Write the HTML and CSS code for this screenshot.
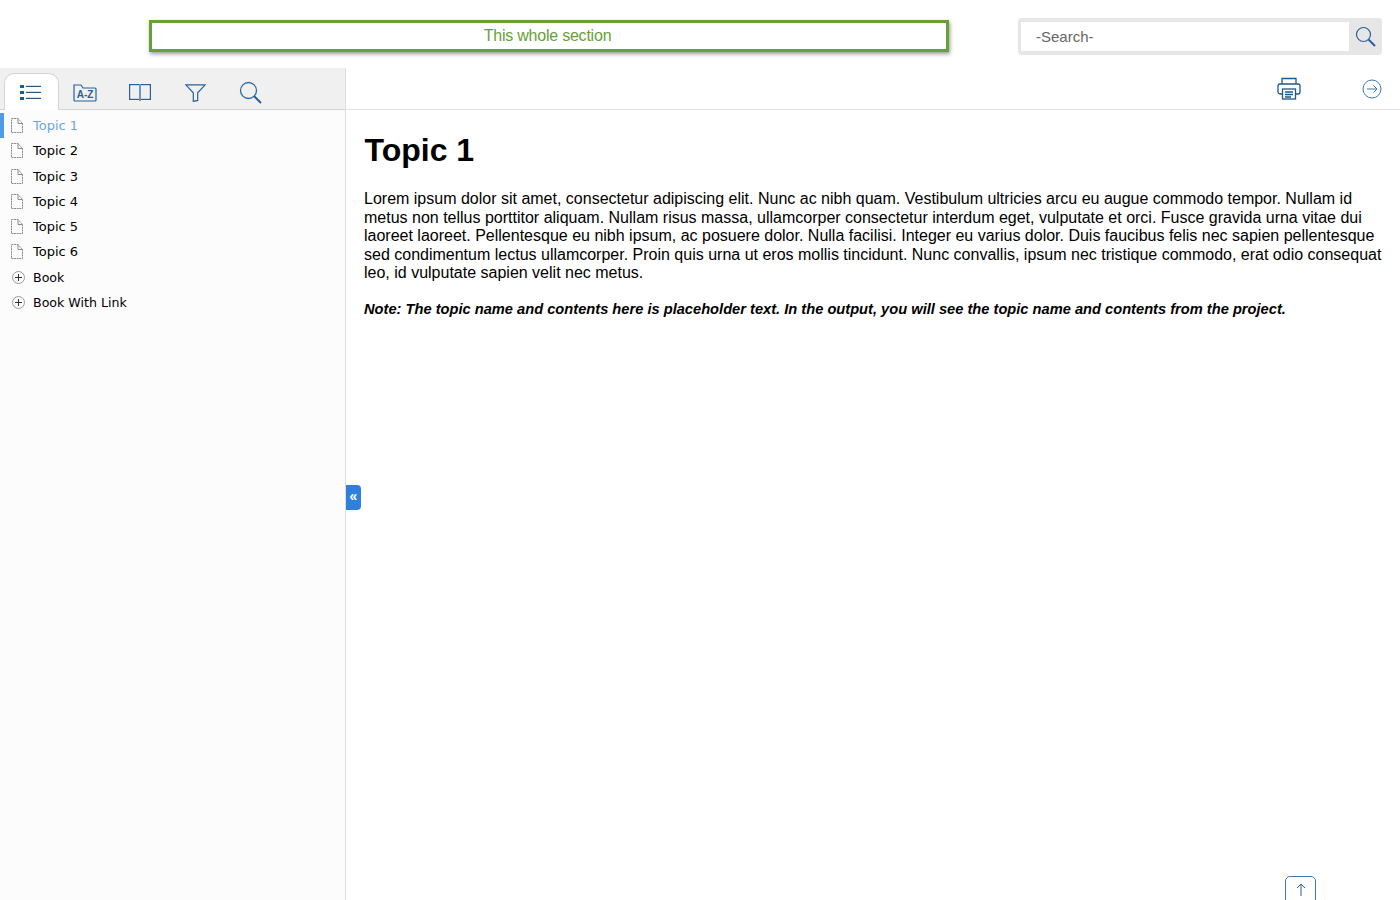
FILE: index.html
```html
<!DOCTYPE html>
<html lang="en">
<head>
    <meta charset="UTF-8">
    <title>Topic 1</title>
    <link rel="stylesheet" href="styles.css">
</head>
<body>
    <header class="top-bar">
        <div class="section-box">This whole section</div>
        <div class="search-box">
            <div class="search-input">-Search-</div>
            <div class="search-btn">
                <svg width="22" height="22" viewBox="0 0 22 22" fill="none" stroke="#2a6099"><circle cx="8.500" cy="8.500" r="7" stroke-width="1.2"/><path d="M13.500 13.500l6.500 6.500" stroke-width="2"/></svg>
            </div>
        </div>
    </header>
    <div class="main">
        <aside class="sidebar">
            <nav class="tabs">
                <div class="tab active">
                    <svg width="21" height="16" viewBox="0 0 21 16" fill="#1f5a8c"><rect x="0" y="0" width="4" height="3"/><rect x="0" y="6" width="4" height="3"/><rect x="0" y="12" width="4" height="3"/><rect x="6" y="0.800" width="15" height="1.200"/><rect x="6" y="6.800" width="15" height="1.200"/><rect x="6" y="12.800" width="15" height="1.200"/></svg>
                </div>
                <div class="tab">
                    <svg width="24" height="18" viewBox="0 0 24 18" fill="none" stroke="#2a6099" stroke-width="1.2"><path d="M1 3V1h7l2 3h12a1 1 0 0 1 1 1v11a1 1 0 0 1-1 1H2a1 1 0 0 1-1-1z"/><text x="12" y="14" text-anchor="middle" class="az">A-Z</text></svg>
                </div>
                <div class="tab">
                    <svg width="22" height="17" viewBox="0 0 22 17" fill="none" stroke="#2a6099" stroke-width="1.2"><rect x="0.600" y="0.600" width="20.800" height="14.800"/><path d="M11 0v17" stroke-width="2" stroke="#6f97bd"/></svg>
                </div>
                <div class="tab">
                    <svg width="21" height="18" viewBox="0 0 21 18" fill="none" stroke="#2a6099" stroke-width="1.2"><path d="M0.800 0.800h19.400l-7.500 8v7.600l-4.400 1v-8.600z"/></svg>
                </div>
                <div class="tab">
                    <svg width="23" height="23" viewBox="0 0 23 23" fill="none"><circle cx="9.500" cy="9.500" r="8" stroke="#2a6cab" stroke-width="1.300"/><path d="M15 15l7 7" stroke="#2a6099" stroke-width="2"/></svg>
                </div>
            </nav>
            <ul class="toc">
                <li class="toc-item selected"><svg class="page-icon" width="12" height="15" viewBox="0 0 12 15" fill="none" stroke="#8c8c8c"><path d="M.5 .5h6.500l4.500 5v9H.5z" stroke-dasharray="2 .6"/><path d="M7 .5v5h4.500"/></svg>Topic 1</li>
                <li class="toc-item"><svg class="page-icon" width="12" height="15" viewBox="0 0 12 15" fill="none" stroke="#8c8c8c"><path d="M.5 .5h6.500l4.500 5v9H.5z" stroke-dasharray="2 .6"/><path d="M7 .5v5h4.500"/></svg>Topic 2</li>
                <li class="toc-item"><svg class="page-icon" width="12" height="15" viewBox="0 0 12 15" fill="none" stroke="#8c8c8c"><path d="M.5 .5h6.500l4.500 5v9H.5z" stroke-dasharray="2 .6"/><path d="M7 .5v5h4.500"/></svg>Topic 3</li>
                <li class="toc-item"><svg class="page-icon" width="12" height="15" viewBox="0 0 12 15" fill="none" stroke="#8c8c8c"><path d="M.5 .5h6.500l4.500 5v9H.5z" stroke-dasharray="2 .6"/><path d="M7 .5v5h4.500"/></svg>Topic 4</li>
                <li class="toc-item"><svg class="page-icon" width="12" height="15" viewBox="0 0 12 15" fill="none" stroke="#8c8c8c"><path d="M.5 .5h6.500l4.500 5v9H.5z" stroke-dasharray="2 .6"/><path d="M7 .5v5h4.500"/></svg>Topic 5</li>
                <li class="toc-item"><svg class="page-icon" width="12" height="15" viewBox="0 0 12 15" fill="none" stroke="#8c8c8c"><path d="M.5 .5h6.500l4.500 5v9H.5z" stroke-dasharray="2 .6"/><path d="M7 .5v5h4.500"/></svg>Topic 6</li>
                <li class="toc-item book"><svg class="plus-icon" width="13" height="13" viewBox="0 0 13 13" fill="none"><circle cx="6.500" cy="6.500" r="6" stroke="#9a9a9a"/><path d="M3 6.500h7M6.500 3v7" stroke="#333"/></svg>Book</li>
                <li class="toc-item book"><svg class="plus-icon" width="13" height="13" viewBox="0 0 13 13" fill="none"><circle cx="6.500" cy="6.500" r="6" stroke="#9a9a9a"/><path d="M3 6.500h7M6.500 3v7" stroke="#333"/></svg>Book With Link</li>
            </ul>
        </aside>
        <main class="content">
            <div class="toolbar">
                <svg class="print-icon" width="24" height="23" viewBox="0 0 24 23" fill="none" stroke="#1f5a8c" stroke-width="1.3"><path d="M5 7V1.500h14V7"/><path d="M5 17H3a2 2 0 0 1-2-2V9a2 2 0 0 1 2-2h18a2 2 0 0 1 2 2v6a2 2 0 0 1-2 2h-2"/><rect x="5.500" y="12" width="13" height="10"/><path d="M8 15h8M8 17.500h8M8 20h6"/></svg>
                <svg class="next-icon" width="20" height="20" viewBox="0 0 20 20" fill="none" stroke="#3d78b0"><circle cx="10" cy="10" r="9"/><path d="M5 10h10M11.500 6.500L15 10l-3.500 3.500"/></svg>
            </div>
            <article class="topic">
                <h1>Topic 1</h1>
                <p>Lorem ipsum dolor sit amet, consectetur adipiscing elit. Nunc ac nibh quam. Vestibulum ultricies arcu eu augue commodo tempor. Nullam id metus non tellus porttitor aliquam. Nullam risus massa, ullamcorper consectetur interdum eget, vulputate et orci. Fusce gravida urna vitae dui laoreet laoreet. Pellentesque eu nibh ipsum, ac posuere dolor. Nulla facilisi. Integer eu varius dolor. Duis faucibus felis nec sapien pellentesque sed condimentum lectus ullamcorper. Proin quis urna ut eros mollis tincidunt. Nunc convallis, ipsum nec tristique commodo, erat odio consequat leo, id vulputate sapien velit nec metus.</p>
                <p class="note">Note: The topic name and contents here is placeholder text. In the output, you will see the topic name and contents from the project.</p>
            </article>
            <div class="collapse-handle">«</div>
            <div class="to-top">
                <svg width="12" height="13" viewBox="0 0 12 13" fill="none" stroke="#2a6099"><path d="M6 13V1M2 5l4-4 4 4"/></svg>
            </div>
        </main>
    </div>
</body>
</html>
```

FILE: styles.css
```css
html, body {
    margin: 0;
    height: 100%;
    overflow: hidden;
}
body {
    font-family: "Liberation Sans", Arial, sans-serif;
    background: #fff;
    color: #000;
    display: flex;
    flex-direction: column;
}
.top-bar {
    height: 68px;
    flex: none;
    display: flex;
    align-items: flex-start;
    padding-left: 149px;
    box-sizing: border-box;
}
.section-box {
    width: 800px;
    height: 32px;
    margin-top: 20px;
    box-sizing: border-box;
    border: 3px solid #68a038;
    box-shadow: 1px 2px 4px rgba(0, 0, 0, 0.4);
    color: #68a038;
    text-align: center;
    font-size: 16px;
    letter-spacing: -0.22px;
    line-height: 25px;
    padding-right: 3px;
}
.search-box {
    width: 364px;
    height: 37px;
    margin: 18px 0 0 69px;
    box-sizing: border-box;
    background: #e6e6e6;
    border-radius: 4px;
    padding: 4px 0 4px 3px;
    display: flex;
}
.search-input {
    width: 328px;
    background: #fff;
    color: #666;
    font-size: 15px;
    line-height: 29px;
    padding-left: 15px;
    box-sizing: border-box;
}
.search-btn {
    flex: 1;
    display: flex;
    align-items: center;
    justify-content: center;
}
.main {
    flex: 1;
    display: flex;
    min-height: 0;
}
.sidebar {
    width: 346px;
    flex: none;
    box-sizing: border-box;
    background: #fcfcfc;
    border-right: 1px solid #dedede;
}
.tabs {
    height: 42px;
    box-sizing: border-box;
    background: #f0f0f0;
    border-bottom: 1px solid #d4d4d4;
    display: flex;
    padding: 5px 0 0 4px;
}
.tab {
    width: 55px;
    height: 37px;
    flex: none;
    display: flex;
    align-items: center;
    justify-content: center;
    box-sizing: border-box;
    padding: 2px 3px 0 0;
}
.tab.active {
    background: #fff;
    border: 1px solid #d4d4d4;
    border-bottom: none;
    border-radius: 10px 10px 0 0;
    height: 37px;
}
.az {
    font-family: "Liberation Sans", sans-serif;
    font-size: 10px;
    font-weight: bold;
    fill: #2a6099;
    stroke: none;
}
.toc {
    list-style: none;
    margin: 3px 0 0;
    padding: 0;
    font-family: "DejaVu Sans", sans-serif;
    font-size: 13px;
}
.toc-item {
    height: 25.25px;
    display: flex;
    align-items: center;
    padding-left: 11px;
    box-sizing: border-box;
}
.toc-item.book {
    font-size: 12.6px;
}
.page-icon {
    margin-right: 10px;
    flex: none;
}
.plus-icon {
    margin: 1px 8px 0 1px;
    flex: none;
}
.toc-item.selected {
    color: #6fa5dc;
    border-left: 4px solid #4f9be8;
    padding-left: 7px;
}
.content {
    flex: 1;
    position: relative;
    min-width: 0;
}
.toolbar {
    height: 42px;
    box-sizing: border-box;
    border-bottom: 1px solid #e2e2e2;
    display: flex;
    align-items: center;
    justify-content: flex-end;
    padding: 0 18px 0 0;
}
.print-icon {
    margin-right: 61px;
}
.topic {
    padding: 0 18px;
}
h1 {
    font-size: 32px;
    line-height: 37px;
    margin: 22px 0 21.3px 0.5px;
}
p {
    font-size: 16px;
    line-height: 18.4px;
    margin: 0 0 17.7px;
}
.note {
    font-size: 14.67px;
    font-weight: bold;
    font-style: italic;
}
.collapse-handle {
    position: absolute;
    left: 0;
    top: 417px;
    width: 15px;
    height: 25px;
    background: #2f80d8;
    border-radius: 0 4px 4px 0;
    color: #fff;
    font-size: 14px;
    font-weight: bold;
    line-height: 22px;
    text-align: center;
}
.to-top {
    position: absolute;
    left: 939px;
    top: 808px;
    width: 31px;
    height: 32px;
    box-sizing: border-box;
    border: 1px solid #3d78b0;
    border-radius: 5px;
    display: flex;
    justify-content: center;
    padding-top: 6px;
    background: #fff;
}
```
